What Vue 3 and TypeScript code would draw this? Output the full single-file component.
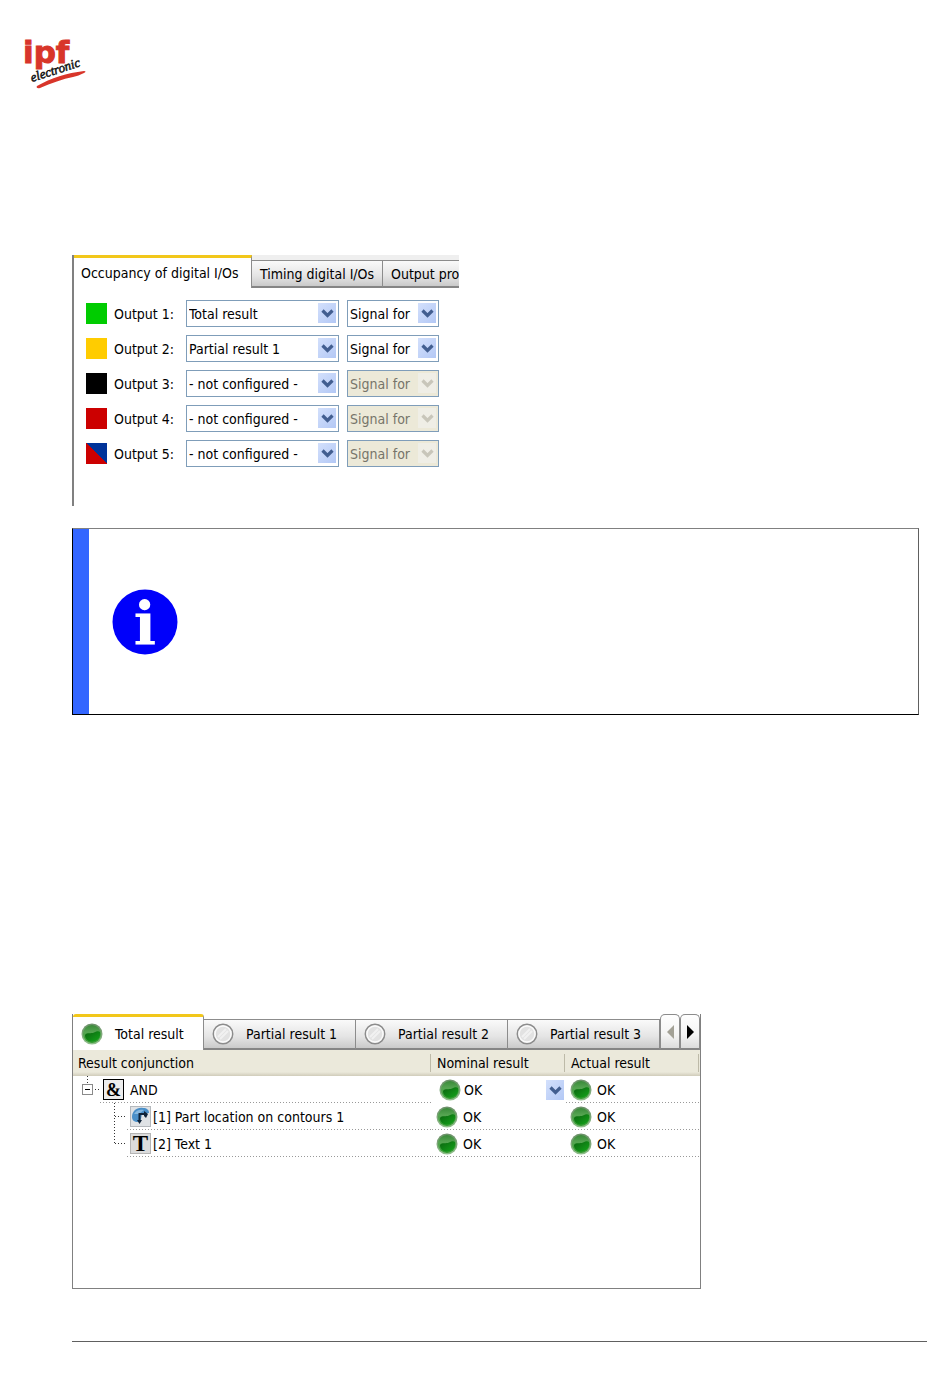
<script setup lang="ts">
import { ref } from 'vue'

interface Output {
  id: number
  color: string
  source: string
  signal: string
  disabled: boolean
}

const sources = ['Total result', 'Partial result 1', '- not configured -']

const outputs = ref<Output[]>([
  { id: 1, color: 'green', source: 'Total result', signal: 'Signal for', disabled: false },
  { id: 2, color: 'yellow', source: 'Partial result 1', signal: 'Signal for', disabled: false },
  { id: 3, color: 'black', source: '- not configured -', signal: 'Signal for', disabled: true },
  { id: 4, color: 'red', source: '- not configured -', signal: 'Signal for', disabled: true },
  { id: 5, color: 'split', source: '- not configured -', signal: 'Signal for', disabled: true },
])

const ioTabs = ['Occupancy of digital I/Os', 'Timing digital I/Os', 'Output pro']
const resultTabs = ['Total result', 'Partial result 1', 'Partial result 2', 'Partial result 3']

const rows = [
  { kind: 'and', label: 'AND', nominal: 'OK', actual: 'OK' },
  { kind: 'locate', label: '[1] Part location on contours 1', nominal: 'OK', actual: 'OK' },
  { kind: 'text', label: '[2] Text 1', nominal: 'OK', actual: 'OK' },
]
</script>

<template>
  <div class="page">
    <svg width="0" height="0" class="defs" aria-hidden="true">
      <defs>
        <linearGradient id="ballRim" x1="0" y1="0" x2="0" y2="1">
          <stop offset="0" stop-color="#6b8f68" />
          <stop offset="1" stop-color="#8fbf8a" />
        </linearGradient>
        <linearGradient id="ballTop" x1="0" y1="0" x2="0" y2="1">
          <stop offset="0" stop-color="#3a8a3a" />
          <stop offset="0.4" stop-color="#56a552" />
          <stop offset="1" stop-color="#2f9a2c" />
        </linearGradient>
        <linearGradient id="ballLow" x1="0" y1="0" x2="1" y2="1">
          <stop offset="0" stop-color="#0b6410" />
          <stop offset="1" stop-color="#14a51a" />
        </linearGradient>
        <symbol id="ball" viewBox="0 0 22 22">
          <circle cx="11" cy="11" r="10.5" fill="url(#ballRim)" />
          <circle cx="11" cy="11" r="9" fill="url(#ballTop)" />
          <path d="M4 12C6 9 10 11 13 9.500C16 8 18 8 19 9C20 15 16 18.500 11 18.500C7 18.500 4 16 4 12Z" fill="url(#ballLow)" />
        </symbol>
        <symbol id="ring" viewBox="0 0 22 22">
          <circle cx="11" cy="11" r="9.700" fill="#e2e2e2" stroke="#8c8c8c" stroke-width="1.500" />
          <circle cx="11" cy="11" r="8" fill="none" stroke="#fafafa" stroke-width="1.500" />
          <path d="M6 14L14 6M8 16L16 8" stroke="#f1f1f1" stroke-width="2" />
        </symbol>
        <symbol id="chevron" viewBox="0 0 18 20">
          <path d="M4.500 7.500L9.500 12.500L14.500 7.500" fill="none" stroke="currentColor" stroke-width="3.200" />
        </symbol>
      </defs>
    </svg>

    <header class="brand">
      <svg width="64" height="50" viewBox="0 0 64 50" role="img" aria-label="ipf electronic">
        <text x="0" y="23" class="brand-name">ipf</text>
        <path d="M14 46C28 38 44 33 61 31C63 31 63 32 61 33C57 35 54 36 50 37C40 39 28 43 17 48C14 49 13 47 14 46Z" fill="#d8352a" />
        <text x="9" y="42" class="brand-sub" transform="rotate(-18 9 42)">electronic</text>
      </svg>
    </header>

    <section class="io-panel" aria-label="Digital I/Os">
      <div class="io-tabs" role="tablist">
        <button
          v-for="(tab, i) in ioTabs"
          :key="tab"
          type="button"
          role="tab"
          class="tab"
          :class="{ active: i === 0 }"
          :aria-selected="i === 0"
        >{{ tab }}</button>
      </div>
      <div class="outputs">
        <div v-for="o in outputs" :key="o.id" class="output">
          <span class="swatch" :class="o.color"></span>
          <label class="output-label" :for="`source-${o.id}`">Output {{ o.id }}:</label>
          <span class="combo source">
            <select :id="`source-${o.id}`" v-model="o.source">
              <option v-for="s in sources" :key="s">{{ s }}</option>
            </select>
            <svg class="arrow" width="18" height="20"><use href="#chevron" /></svg>
          </span>
          <span class="combo signal">
            <select v-model="o.signal" :disabled="o.disabled" :aria-label="`Output ${o.id} signal`">
              <option>Signal for</option>
            </select>
            <svg class="arrow" width="18" height="20"><use href="#chevron" /></svg>
          </span>
        </div>
      </div>
    </section>

    <aside class="note" aria-label="Information">
      <svg width="66" height="66" viewBox="0 0 66 66" role="img" aria-label="Information">
        <circle cx="33" cy="33" r="32.500" fill="#0000fa" />
        <text x="33" y="56" text-anchor="middle" class="note-glyph">i</text>
      </svg>
    </aside>

    <section class="result-panel" aria-label="Results">
      <div class="result-tabs" role="tablist">
        <button
          v-for="(tab, i) in resultTabs"
          :key="tab"
          type="button"
          role="tab"
          class="tab"
          :class="{ active: i === 0 }"
          :aria-selected="i === 0"
        >
          <svg width="22" height="22"><use :href="i === 0 ? '#ball' : '#ring'" /></svg>
          <span>{{ tab }}</span>
        </button>
        <button type="button" class="scroll" aria-label="Previous tabs" disabled>
          <svg width="9" height="16" viewBox="0 0 9 16"><path d="M8 1V15L1 8Z" fill="#a3a196" /></svg>
        </button>
        <button type="button" class="scroll" aria-label="Next tabs">
          <svg width="9" height="16" viewBox="0 0 9 16"><path d="M1 1V15L8 8Z" fill="#000" /></svg>
        </button>
      </div>

      <table class="results">
        <thead>
          <tr>
            <th class="col-name">Result conjunction</th>
            <th class="col-nominal">Nominal result</th>
            <th class="col-actual">Actual result</th>
          </tr>
        </thead>
        <tbody>
          <tr v-for="row in rows" :key="row.label" :class="row.kind">
            <td>
              <div class="node">
                <svg v-if="row.kind === 'and'" class="branch" width="27" height="27" viewBox="0 0 27 27">
                  <path d="M14.500 0V7M22 13.500H27" stroke="#333" stroke-dasharray="1 2" />
                  <rect x="9.500" y="8.500" width="10" height="10" fill="#fff" stroke="#8a8a8a" />
                  <path d="M12 13.500H17" stroke="#000" />
                </svg>
                <svg v-else class="branch" width="54" height="27" viewBox="0 0 54 27">
                  <path
                    :d="row.kind === 'text' ? 'M41.500 0V14M42 13.500H53' : 'M41.500 0V27M42 13.500H53'"
                    fill="none"
                    stroke="#333"
                    stroke-dasharray="1 2"
                  />
                </svg>
                <div class="node-body">
                  <svg v-if="row.kind === 'and'" width="21" height="21" viewBox="0 0 21 21">
                    <rect x=".5" y=".5" width="20" height="20" fill="#ededed" stroke="#000" />
                    <text x="10.500" y="17" text-anchor="middle" class="amp">&amp;</text>
                  </svg>
                  <svg v-else-if="row.kind === 'locate'" width="21" height="21" viewBox="0 0 21 21">
                    <rect x=".5" y=".5" width="20" height="20" fill="#dfe2e5" stroke="#b4b8bc" />
                    <path d="M2 11C2 5 7 1 13 2C17 2 19 4 19 7L12 8C11 11 12 14 8 16C4 16 2 14 2 11Z" fill="#4a8fc8" />
                    <path d="M4 8C6 4 10 3 14 4L9 8Z" fill="#86b8e0" />
                    <path d="M9.500 16V8H16" fill="none" stroke="#10243a" stroke-width="2" />
                    <path d="M7 14L9.500 18L12 14ZM14 5L18 8L16 12L14 10Z" fill="#10243a" />
                  </svg>
                  <svg v-else width="21" height="21" viewBox="0 0 21 21">
                    <rect x=".5" y=".5" width="20" height="20" fill="#dcdcdc" stroke="#b4b4b4" />
                    <text x="10.500" y="18" text-anchor="middle" class="tee">T</text>
                  </svg>
                  <span>{{ row.label }}</span>
                </div>
              </div>
            </td>
            <td>
              <div class="state nominal">
                <svg width="22" height="22"><use href="#ball" /></svg>
                <span>{{ row.nominal }}</span>
                <button v-if="row.kind === 'and'" type="button" class="drop" aria-label="Choose nominal result">
                  <svg width="18" height="20"><use href="#chevron" /></svg>
                </button>
              </div>
            </td>
            <td>
              <div class="state actual">
                <svg width="22" height="22"><use href="#ball" /></svg>
                <span>{{ row.actual }}</span>
              </div>
            </td>
          </tr>
        </tbody>
      </table>
    </section>

    <hr class="rule" />
  </div>
</template>

<style>
body {
  margin: 0;
  background: #fff;
}
</style>

<style scoped>
.page {
  box-sizing: border-box;
  padding: 40px 23px 44px 72px;
  font-family: "DejaVu Sans Condensed", "Noto Sans", sans-serif;
  font-size: 14px;
  line-height: 18px;
  color: #000;
}
.page * {
  box-sizing: border-box;
}
svg {
  display: block;
  flex: none;
  overflow: visible;
}
.defs {
  position: absolute;
}
button,
select {
  font: inherit;
  color: inherit;
  margin: 0;
}

.brand {
  margin-left: -49px;
  height: 50px;
}
.brand-name {
  font: bold 31px "DejaVu Sans", sans-serif;
  fill: #d8352a;
  stroke: #d8352a;
  stroke-width: 1px;
}
.brand-sub {
  font: italic 13px "Liberation Serif", serif;
  fill: #111;
  stroke: #111;
  stroke-width: 0.5px;
}

.io-panel {
  width: 387px;
  max-width: 100%;
  min-height: 251px;
  margin-top: 165px;
  border-left: 2px solid #808080;
  overflow: hidden;
}
.io-tabs {
  display: flex;
  align-items: flex-end;
  height: 33px;
  background: #efefef;
}
.tab {
  flex: none;
  display: flex;
  align-items: center;
  white-space: nowrap;
  border: 0;
  border-top: 1px solid #8c8c8c;
  border-right: 1px solid #8c8c8c;
  border-bottom: 2px solid #858585;
  background: linear-gradient(#fafafa, #e4e4e4 60%, #cacaca);
}
.tab.active {
  background: #fff;
  border-top: 3px solid #f2c71a;
  border-bottom: 0;
}
.io-tabs .tab {
  height: 28px;
  padding: 0 8px;
}
.io-tabs .tab.active {
  width: 178px;
  height: 33px;
  padding: 0 7px;
}
.io-tabs .tab:nth-child(2) {
  width: 131px;
}
.outputs {
  display: grid;
  gap: 8px;
  padding: 12px 0 0 12px;
}
.output {
  display: flex;
  align-items: center;
}
.swatch {
  width: 21px;
  height: 21px;
  margin-right: 7px;
}
.green { background: #00cc00; }
.yellow { background: #ffcc00; }
.black { background: #000; }
.red { background: #cc0000; }
.split { background: linear-gradient(45deg, #cc0000 50%, #003399 50%); }
.output-label {
  width: 72px;
}
.combo {
  position: relative;
  height: 27px;
}
.source {
  width: 153px;
  margin-right: 8px;
}
.signal {
  width: 92px;
}
.combo select {
  appearance: none;
  width: 100%;
  height: 100%;
  padding: 0 20px 0 2px;
  border: 1px solid #7f9db9;
  border-radius: 0;
  background: #fff;
  opacity: 1;
}
.combo select:disabled {
  background: #ece9d8;
  color: #77756a;
}
.arrow {
  position: absolute;
  right: 3px;
  top: 3px;
  color: #425e90;
  background: linear-gradient(135deg, #d3e0fc, #b3c8f5);
  pointer-events: none;
}
select:disabled + .arrow {
  color: #c8c6ba;
  background: #efeee6;
}

.note {
  display: flex;
  align-items: center;
  height: 187px;
  margin: 22px 8px 0 0;
  padding-left: 39px;
  border: 1px solid #000;
  border-top-color: #808080;
  border-right-color: #606060;
  background: linear-gradient(#3366ff, #3366ff) left / 16px 100% no-repeat;
}
.note-glyph {
  font: bold 60px "DejaVu Serif", serif;
  fill: #fff;
}

.result-panel {
  width: 629px;
  max-width: 100%;
  height: 275px;
  margin-top: 299px;
  border: 1px solid #808080;
  border-top: 0;
}
.result-tabs {
  display: flex;
  align-items: flex-end;
  height: 36px;
}
.result-tabs .tab {
  width: 152px;
  height: 31px;
  padding: 0 8px;
  gap: 12px;
}
.result-tabs .tab.active {
  width: 131px;
  height: 36px;
  border-radius: 3px 3px 0 0;
}
.scroll {
  flex: 1;
  display: flex;
  align-items: center;
  justify-content: center;
  height: 36px;
  padding: 0;
  border: 1px solid #8c8c8c;
  border-bottom: 2px solid #858585;
  border-radius: 5px 5px 0 0;
  background: linear-gradient(#fff, #f4f4f4 60%, #dcdcdc);
}
.results {
  width: 100%;
  border-collapse: collapse;
  table-layout: fixed;
}
.results th {
  height: 26px;
  padding: 0 5px;
  text-align: left;
  font-weight: normal;
  background:
    linear-gradient(#bdbaa8, #bdbaa8) right 1px center / 1px 18px no-repeat,
    linear-gradient(#ebe9db 22px, #d0ccba);
}
.col-name { width: 359px; }
.col-nominal { width: 134px; }
.results td {
  height: 27px;
  padding: 0;
}
.node,
.node-body,
.state {
  display: flex;
  align-items: center;
  height: 27px;
}
.node-body,
.state {
  flex: 1;
  background: repeating-linear-gradient(90deg, #999 0 1px, transparent 1px 3px) left bottom / 100% 1px no-repeat;
}
.node-body {
  gap: 2px;
  padding-left: 3px;
}
.and .node-body {
  gap: 6px;
}
.state {
  gap: 5px;
  padding-left: 4px;
}
.and .nominal {
  padding-left: 7px;
  gap: 3px;
  background: none;
}
.drop {
  width: 18px;
  height: 20px;
  margin-left: auto;
  margin-right: 2px;
  padding: 0;
  border: 0;
  color: #425e90;
  background: linear-gradient(135deg, #d3e0fc, #b3c8f5);
}
.amp {
  font: bold 18px "Liberation Serif", serif;
}
.tee {
  font: bold 23px "Liberation Serif", serif;
}
.rule {
  height: 1px;
  margin: 52px 0 0;
  border: 0;
  background: #606060;
}
</style>
